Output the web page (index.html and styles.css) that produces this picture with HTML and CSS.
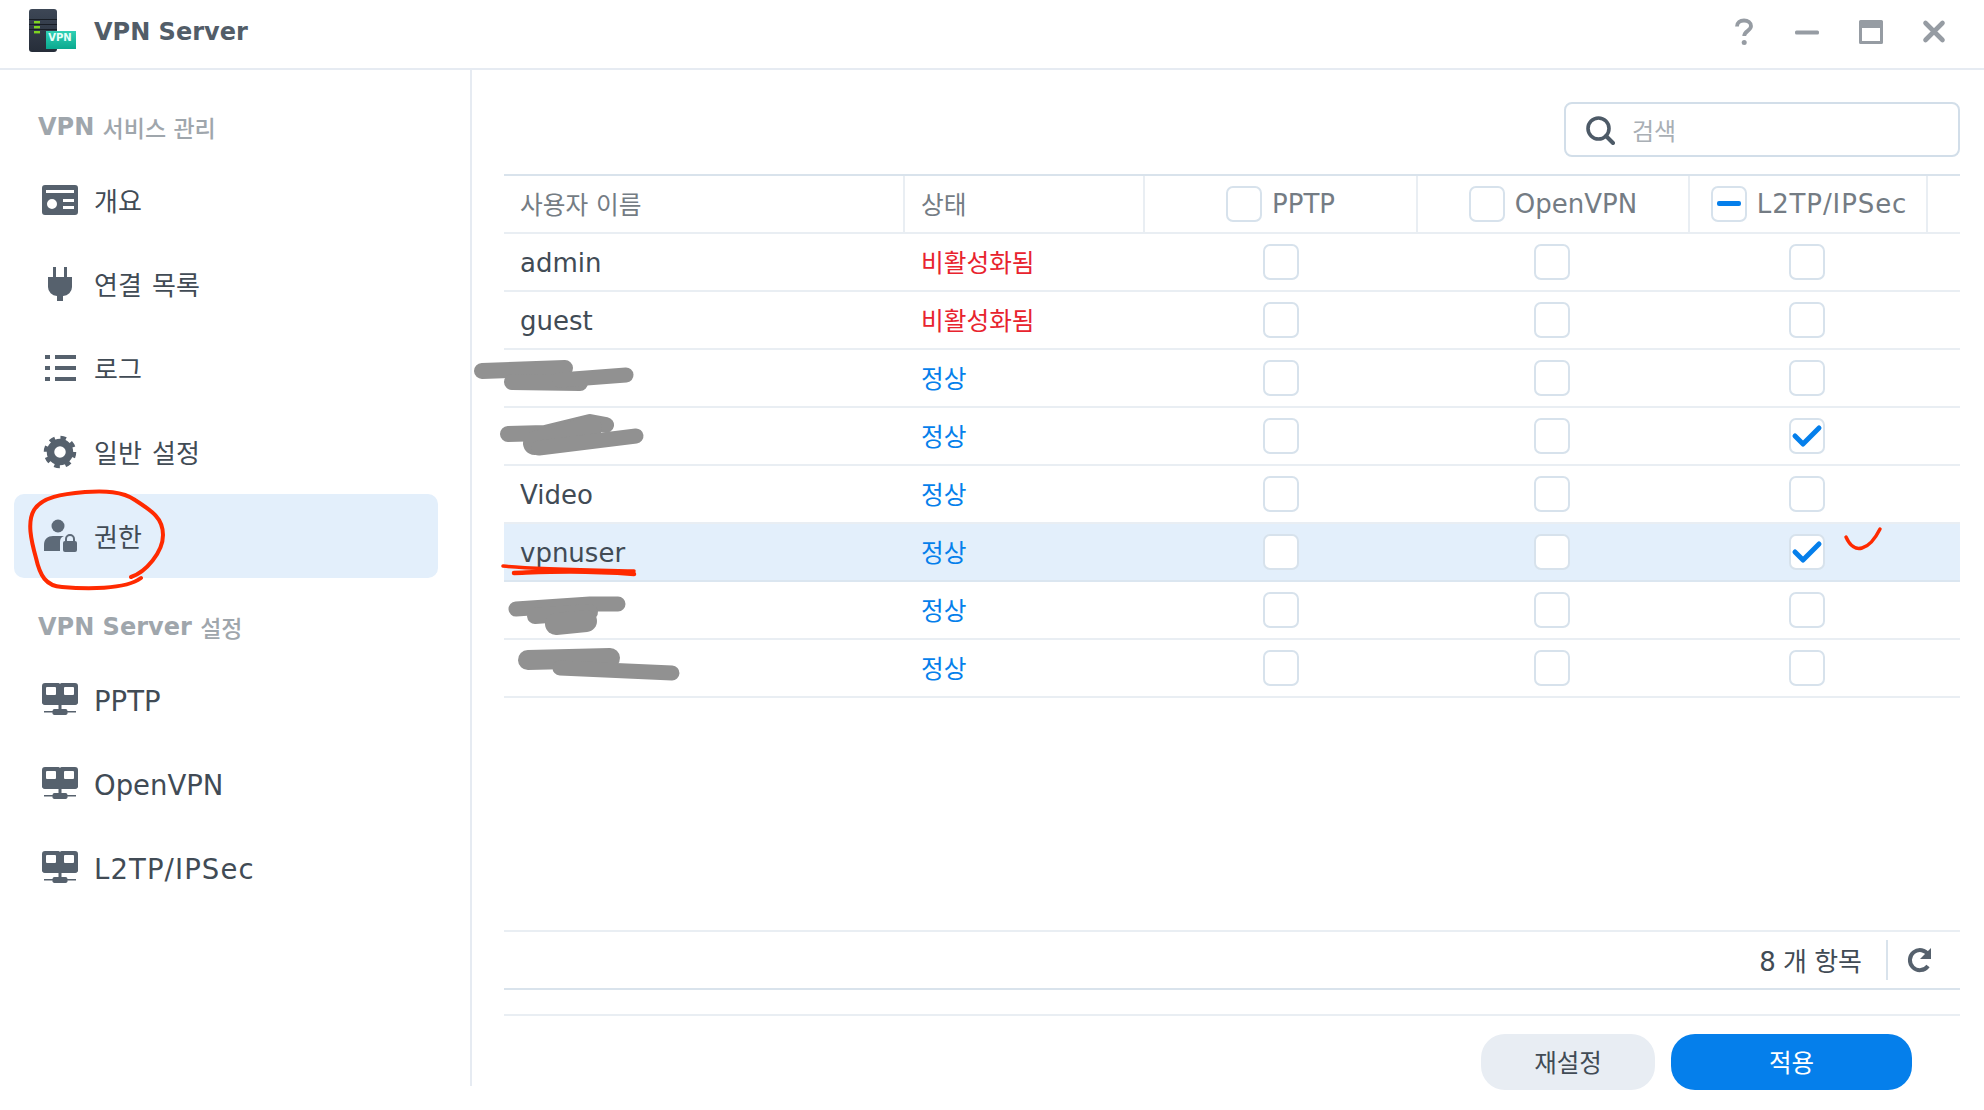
FILE: index.html
```html
<!DOCTYPE html>
<html lang="ko">
<head>
<meta charset="utf-8">
<title>VPN Server</title>
<link rel="stylesheet" href="styles.css">
</head>
<body>
<div class="window">
  <header class="titlebar">
    <svg class="app-icon" viewBox="0 0 48 46" width="48" height="46">
      <defs><linearGradient id="rack" x1="0" y1="0" x2="0" y2="1"><stop offset="0" stop-color="#3d4756"/><stop offset="1" stop-color="#262d39"/></linearGradient><linearGradient id="badge" x1="0" y1="0" x2="0" y2="1"><stop offset="0" stop-color="#2fd0b4"/><stop offset="1" stop-color="#0aa98f"/></linearGradient></defs>
      <rect x="1" y="0" width="28" height="43" rx="3" fill="url(#rack)"/>
      <rect x="1" y="10" width="28" height="1" fill="#181d25"/>
      <rect x="1" y="15" width="28" height="1" fill="#181d25"/>
      <rect x="1" y="20" width="28" height="1" fill="#181d25"/>
      <rect x="6" y="12" width="6" height="2.4" fill="#7ed321"/>
      <rect x="6" y="17" width="6" height="2.4" fill="#7ed321"/>
      <rect x="6" y="22" width="6" height="2.4" fill="#7ed321"/>
      <rect x="18" y="22" width="30" height="18" fill="url(#badge)"/>
    </svg>
    <span class="app-badge">VPN</span>
    <h1 class="app-title">VPN Server</h1>
    <div class="win-controls">
      <svg viewBox="0 0 24 28" width="24" height="28"><path d="M5 8.500C5 4.500 8 2.500 12 2.500s7 2.200 7 5.600c0 4.800-6.800 4.800-6.800 10" fill="none" stroke="#969ca3" stroke-width="3.800"/><circle cx="12.200" cy="24.500" r="2.500" fill="#969ca3"/></svg>
      <svg viewBox="0 0 26 28" width="26" height="28"><rect x="1" y="12.500" width="24" height="4" rx="1.500" fill="#969ca3"/></svg>
      <svg viewBox="0 0 26 28" width="26" height="28"><path fill-rule="evenodd" d="M1 3.500a1.500 1.500 0 0 1 1.500-1.500h21a1.500 1.500 0 0 1 1.500 1.500v21a1.500 1.500 0 0 1-1.500 1.500h-21a1.500 1.500 0 0 1-1.500-1.500zM4 10v13h18V10z" fill="#969ca3"/></svg>
      <svg viewBox="0 0 24 28" width="24" height="28"><path d="M3.500 5l17 17M20.500 5L3.500 22" stroke="#969ca3" stroke-width="4.600" fill="none" stroke-linecap="round"/></svg>
    </div>
  </header>
  <div class="content">
    <nav class="sidebar">
      <h2 class="section-title">VPN&nbsp;<span class="title-ko">서비스 관리</span></h2>
      <a class="nav-item">
        <svg class="nav-icon" viewBox="0 0 36 36"><path fill-rule="evenodd" d="M3 3h30a3 3 0 0 1 3 3v24a3 3 0 0 1-3 3H3a3 3 0 0 1-3-3V6a3 3 0 0 1 3-3zM4 8v3h28V8zM10 17a5 5 0 1 0 0 10 5 5 0 0 0 0-10zM21 17v3h11v-3zM21 24v3h11v-3z" fill="#56616d"/></svg>
        <span class="nav-ko">개요</span>
      </a>
      <a class="nav-item">
        <svg class="nav-icon" viewBox="0 0 36 36"><path d="M11 1h3v10h8V1h3v10h5v10a9 9 0 0 1-9 9v5h-6v-5a9 9 0 0 1-9-9V11h5z" fill="#56616d"/></svg>
        <span class="nav-ko">연결 목록</span>
      </a>
      <a class="nav-item">
        <svg class="nav-icon" viewBox="0 0 36 36"><path d="M3 5h5v4H3zM13 5h21v4H13zM3 16h5v4H3zM13 16h21v4H13zM3 27h5v4H3zM13 27h21v4H13z" fill="#56616d"/></svg>
        <span class="nav-ko">로그</span>
      </a>
      <a class="nav-item">
        <svg class="nav-icon" viewBox="0 0 36 36"><circle cx="18" cy="18" r="9.500" fill="none" stroke="#56616d" stroke-width="7.500"/><circle cx="18" cy="18" r="14" fill="none" stroke="#56616d" stroke-width="4.500" stroke-dasharray="5.500 5.500"/></svg>
        <span class="nav-ko">일반 설정</span>
      </a>
      <a class="nav-item is-active">
        <svg class="nav-icon" viewBox="0 0 36 36"><circle cx="16" cy="8" r="6.500" fill="#5d6a78"/><path d="M2 33v-6c0-6 4-9 9-9h11c-3 1-4 3-4 6v9z" fill="#5d6a78"/><rect x="21" y="23" width="14" height="11" rx="2" fill="#5d6a78"/><path d="M24 24v-3a4 4 0 0 1 8 0v3" fill="none" stroke="#5d6a78" stroke-width="2"/></svg>
        <span class="nav-ko">권한</span>
      </a>
      <h2 class="section-title section-title-next">VPN Server&nbsp;<span class="title-ko">설정</span></h2>
      <a class="nav-item">
        <svg class="nav-icon" viewBox="0 0 36 36"><use href="#net-icon"/></svg>
        <span class="latin">PPTP</span>
      </a>
      <a class="nav-item">
        <svg class="nav-icon" viewBox="0 0 36 36"><use href="#net-icon"/></svg>
        <span class="latin">OpenVPN</span>
      </a>
      <a class="nav-item">
        <svg class="nav-icon" viewBox="0 0 36 36"><use href="#net-icon"/></svg>
        <span class="latin latin-wide">L2TP/IPSec</span>
      </a>
    </nav>
    <main class="main">
      <div class="toolbar">
        <label class="search">
          <svg viewBox="0 0 30 30" width="30" height="30"><circle cx="13.500" cy="13.500" r="10.500" fill="none" stroke="#4d5a67" stroke-width="3.600"/><path d="M21 21l7 7" stroke="#4d5a67" stroke-width="4" stroke-linecap="round"/></svg>
          <span class="search-placeholder">검색</span>
        </label>
      </div>
      <div class="grid-wrap">
        <div class="grid-row grid-head">
          <div class="cell cell-ko">사용자 이름</div>
          <div class="cell cell-ko">상태</div>
          <div class="cell cell-center"><i class="check"></i>PPTP</div>
          <div class="cell cell-center"><i class="check"></i>OpenVPN</div>
          <div class="cell cell-center cell-wide"><i class="check check-partial"></i><span class="head-wide">L2TP/IPSec</span></div>
          <div class="cell cell-last"></div>
        </div>
        <div class="grid-row"><div class="cell cell-name">admin</div><div class="cell cell-ko st-off">비활성화됨</div><div class="cell cell-center"><i class="check"></i></div><div class="cell cell-center"><i class="check"></i></div><div class="cell cell-center"><i class="check"></i></div></div>
        <div class="grid-row"><div class="cell cell-name">guest</div><div class="cell cell-ko st-off">비활성화됨</div><div class="cell cell-center"><i class="check"></i></div><div class="cell cell-center"><i class="check"></i></div><div class="cell cell-center"><i class="check"></i></div></div>
        <div class="grid-row"><div class="cell cell-name"></div><div class="cell cell-ko st-on">정상</div><div class="cell cell-center"><i class="check"></i></div><div class="cell cell-center"><i class="check"></i></div><div class="cell cell-center"><i class="check"></i></div></div>
        <div class="grid-row"><div class="cell cell-name"></div><div class="cell cell-ko st-on">정상</div><div class="cell cell-center"><i class="check"></i></div><div class="cell cell-center"><i class="check"></i></div><div class="cell cell-center"><i class="check is-checked"><svg viewBox="0 0 36 36"><path d="M6 18l8 8L30 10" fill="none" stroke="#057feb" stroke-width="5" stroke-linecap="round" stroke-linejoin="round"/></svg></i></div></div>
        <div class="grid-row"><div class="cell cell-name">Video</div><div class="cell cell-ko st-on">정상</div><div class="cell cell-center"><i class="check"></i></div><div class="cell cell-center"><i class="check"></i></div><div class="cell cell-center"><i class="check"></i></div></div>
        <div class="grid-row is-selected"><div class="cell cell-name">vpnuser</div><div class="cell cell-ko st-on">정상</div><div class="cell cell-center"><i class="check"></i></div><div class="cell cell-center"><i class="check"></i></div><div class="cell cell-center"><i class="check is-checked"><svg viewBox="0 0 36 36"><path d="M6 18l8 8L30 10" fill="none" stroke="#057feb" stroke-width="5" stroke-linecap="round" stroke-linejoin="round"/></svg></i></div></div>
        <div class="grid-row"><div class="cell cell-name"></div><div class="cell cell-ko st-on">정상</div><div class="cell cell-center"><i class="check"></i></div><div class="cell cell-center"><i class="check"></i></div><div class="cell cell-center"><i class="check"></i></div></div>
        <div class="grid-row"><div class="cell cell-name"></div><div class="cell cell-ko st-on">정상</div><div class="cell cell-center"><i class="check"></i></div><div class="cell cell-center"><i class="check"></i></div><div class="cell cell-center"><i class="check"></i></div></div>
      </div>
      <div class="pager">
        <span class="pager-count">8 개 항목</span>
        <span class="pager-sep"></span>
        <svg viewBox="0 0 28 28" width="28" height="28"><path d="M22 20a10 10 0 1 1 .5-11" fill="none" stroke="#56616d" stroke-width="4"/><path d="M25 2v11H14z" fill="#56616d"/></svg>
      </div>
      <div class="actions">
        <button class="btn btn-reset">재설정</button>
        <button class="btn btn-apply">적용</button>
      </div>
    </main>
  </div>
</div>

<svg class="defs" width="0" height="0">
  <symbol id="net-icon" viewBox="0 0 36 36">
    <path fill-rule="evenodd" d="M3 1h13a2 2 0 0 1 2 1 2 2 0 0 1 2-1h13a3 3 0 0 1 3 3v15a3 3 0 0 1-3 4H3a3 3 0 0 1-3-4V4a3 3 0 0 1 3-3zM5 5a1 1 0 0 0-1 1v6a1 1 0 0 0 1 1h8a1 1 0 0 0 1-1V6a1 1 0 0 0-1-1zM23 5a1 1 0 0 0-1 1v6a1 1 0 0 0 1 1h8a1 1 0 0 0 1-1V6a1 1 0 0 0-1-1z" fill="#56616d"/>
    <path d="M16.500 23h3v4h4a2 2 0 0 1 2 2h8.500v1.500H25.500a2 2 0 0 1-2 2.500h-11a2 2 0 0 1-2-2.500H2V29h8.500a2 2 0 0 1 2-2h4z" fill="#56616d"/>
  </symbol>
</svg>

<svg class="annotations" viewBox="0 0 1984 1110" width="1984" height="1110">
  <g fill="none" stroke="#919191" stroke-linecap="round" stroke-linejoin="round">
    <path d="M482 371L565 368" stroke-width="16"/>
    <path d="M512 382L580 383" stroke-width="16"/>
    <path d="M560 380L626 375" stroke-width="15"/>
    <path d="M508 434L545 433L590 422L606 425" stroke-width="16"/>
    <path d="M535 443L590 428" stroke-width="24"/>
    <path d="M539 448L636 436" stroke-width="15"/>
    <path d="M516 609L590 604L618 604" stroke-width="15"/>
    <path d="M535 616L590 612" stroke-width="16"/>
    <path d="M556 624L586 621" stroke-width="22"/>
    <path d="M528 660L610 658" stroke-width="20"/>
    <path d="M560 668L672 673" stroke-width="15"/>
  </g>
  <g fill="none" stroke="#ff2a00" stroke-linecap="round" stroke-linejoin="round">
    <path d="M131 577C146 572 163 552 163 535C163 518 152 511 135 500C122 491 105 491 85 492C62 494 42 497 34 510C27 522 31 540 36 558C40 576 46 586 62 587C85 589 125 590 141 578" stroke-width="4"/>
    <path d="M503 566C530 569 590 570 634 571" stroke-width="3.500"/>
    <path d="M514 573C545 572 575 570 634 574" stroke-width="4.500"/>
    <path d="M1846 537C1850 546 1856 550 1862 548C1870 546 1876 537 1880 529" stroke-width="3.500"/>
  </g>
</svg>
</body>
</html>
```

FILE: styles.css
```css
* { box-sizing: border-box; }
html, body { margin: 0; padding: 0; }
body {
  width: 1984px;
  height: 1110px;
  overflow: hidden;
  background: #fff;
  color: #414b55;
  font-family: "DejaVu Sans", "Noto Sans CJK KR", sans-serif;
  font-size: 26px;
  position: relative;
}
.window { display: flex; flex-direction: column; height: 100%; }
.titlebar {
  height: 70px;
  border-bottom: 2px solid #e6ebf2;
  display: flex;
  align-items: center;
  padding: 0 38px 5px 28px;
  position: relative;
  flex: none;
}
.app-icon { flex: none; }
.app-badge {
  position: absolute;
  left: 46px;
  top: 32px;
  width: 28px;
  text-align: center;
  color: #e6fff9;
  font-size: 10px;
  font-weight: 700;
  line-height: 12px;
}
.app-title { margin: 0 0 0 18px; font-size: 24px; font-weight: 700; color: #525d68; }
.win-controls { margin-left: auto; display: flex; align-items: center; gap: 38px; }
.content { display: flex; flex: 1; min-height: 0; }
.sidebar {
  width: 472px;
  height: 1016px;
  flex: none;
  border-right: 2px solid #e6ebf2;
  padding-top: 26px;
}
.section-title {
  margin: 0;
  height: 62px;
  padding: 0 0 1px 38px;
  display: flex;
  align-items: center;
  font-size: 24px;
  font-weight: 700;
  color: #9fa6ac;
}
.title-ko { font-size: 23px; font-weight: 500; }
.section-title-next { margin-top: 18px; }
.nav-item {
  display: flex;
  align-items: center;
  gap: 16px;
  height: 84px;
  width: 424px;
  margin-left: 14px;
  padding-left: 28px;
  border-radius: 10px;
  color: #414b55;
}
.nav-item.is-active { background: #e3effb; }
.nav-icon { width: 36px; height: 36px; flex: none; }
.nav-ko { padding-bottom: 2px; word-spacing: 2px; }
.latin { font-size: 27.500px; padding-top: 2px; }
.latin-wide { letter-spacing: 1.100px; }
.main {
  flex: 1;
  padding: 32px 24px 0 32px;
  display: flex;
  flex-direction: column;
  min-width: 0;
}
.toolbar { display: flex; justify-content: flex-end; margin-bottom: 17px; flex: none; }
.search {
  width: 396px;
  height: 55px;
  border: 2px solid #d2dee9;
  border-radius: 8px;
  display: flex;
  align-items: center;
  gap: 17px;
  padding-left: 19px;
}
.search-placeholder { color: #a9afb5; font-size: 24px; }
.grid-wrap { flex: none; height: 756px; border-top: 2px solid #d9e3ec; }
.grid-row {
  display: grid;
  grid-template-columns: 401px 240px 273px 272px 238px 32px;
  height: 58px;
  border-bottom: 2px solid #e9eef3;
}
.grid-head { color: #747c84; }
.grid-head .cell { border-right: 2px solid #e9eef3; }
.grid-head .cell-last { border-right: 0; }
.cell { display: flex; align-items: center; padding-left: 16px; min-width: 0; }
.cell-ko { font-size: 24.700px; padding-bottom: 2px; }
.cell-name { padding-top: 2px; }
.cell-center { justify-content: center; padding: 0 4px 0 0; gap: 10px; }
.cell-center:nth-child(3) { padding-right: 2px; }
.grid-head .cell-center { padding-right: 0; }
.grid-head .cell-wide { padding-left: 2px; }
.head-wide { letter-spacing: .9px; }
.is-selected { background: #e3effb; border-bottom-color: #dbe6f0; }
.check {
  width: 36px;
  height: 36px;
  border: 2px solid #d7e2ec;
  border-radius: 7px;
  background: #fff;
  display: block;
  flex: none;
  position: relative;
}
.check svg { position: absolute; left: -2px; top: -2px; width: 36px; height: 36px; }
.check-partial::after {
  content: "";
  position: absolute;
  left: 4px;
  right: 4px;
  top: 13px;
  height: 5px;
  border-radius: 2px;
  background: #057feb;
}
.st-off { color: #e8232e; }
.st-on { color: #057feb; }
.pager {
  flex: none;
  height: 60px;
  border-top: 2px solid #e9eef3;
  border-bottom: 2px solid #d9e3ec;
  display: flex;
  align-items: center;
  justify-content: flex-end;
  padding-right: 26px;
}
.pager-count { padding-bottom: 2px; word-spacing: -1px; }
.pager-sep { width: 2px; height: 40px; background: #d9e3ec; margin: 0 18px 0 24px; }
.actions {
  flex: none;
  margin-top: 24px;
  border-top: 2px solid #e9eef3;
  padding: 18px 48px 0 0;
  display: flex;
  justify-content: flex-end;
  gap: 16px;
}
.btn {
  height: 56px;
  border: 0;
  border-radius: 24px;
  font: inherit;
  font-size: 24.500px;
  padding: 0 0 2px;
}
.btn-reset { width: 174px; background: #e8edf3; color: #414b55; }
.btn-apply { width: 241px; background: #057feb; color: #fff; }
.defs { position: absolute; }
.annotations { position: absolute; left: 0; top: 0; pointer-events: none; }
```
